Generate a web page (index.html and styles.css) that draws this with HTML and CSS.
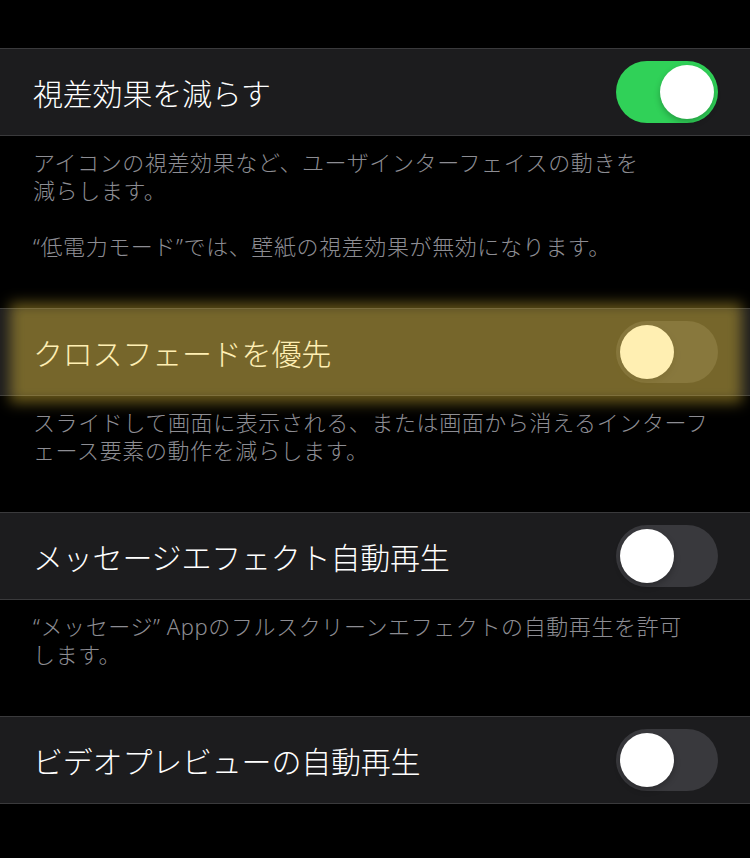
FILE: index.html
```html
<!DOCTYPE html>
<html lang="ja">
<head>
<meta charset="utf-8">
<link rel="stylesheet" href="styles.css">
</head>
<body>
<div class="page">
  <div class="row">
    <span class="label">視差効果を減らす</span>
    <span class="switch on"><span class="knob"></span></span>
  </div>
  <div class="footer">アイコンの視差効果など、ユーザインターフェイスの動きを<br>減らします。<br><br>“低電力モード”では、壁紙の視差効果が無効になります。</div>

  <div class="row highlighted">
    <span class="label">クロスフェードを優先</span>
    <span class="switch"><span class="knob"></span></span>
    <span class="glow"></span>
  </div>
  <div class="footer">スライドして画面に表示される、または画面から消えるインターフ<br>ェース要素の動作を減らします。</div>

  <div class="row">
    <span class="label">メッセージエフェクト自動再生</span>
    <span class="switch"><span class="knob"></span></span>
  </div>
  <div class="footer">“メッセージ” Appのフルスクリーンエフェクトの自動再生を許可<br>します。</div>

  <div class="row">
    <span class="label">ビデオプレビューの自動再生</span>
    <span class="switch"><span class="knob"></span></span>
  </div>
</div>
</body>
</html>
```
FILE: styles.css
```css
html, body {
  margin: 0;
  background: #000;
}
body {
  font-family: "Noto Sans", "Noto Sans CJK JP", sans-serif;
  width: 750px;
  height: 858px;
  overflow: hidden;
}
.page {
  padding-top: 48px;
}
.row {
  position: relative;
  height: 86px;
  background: #1c1c1e;
  border-top: 1px solid #3a3a3c;
  border-bottom: 1px solid #3a3a3c;
  display: flex;
  align-items: center;
  justify-content: space-between;
  padding: 0 32px 0 33px;
}
.label {
  font-family: "Noto Sans CJK JP", sans-serif;
  font-size: 30px;
  font-weight: 300;
  color: #fff;
  letter-spacing: -0.2px;
}
.footer {
  padding: 12px 33px 48px;
  font-size: 22px;
  font-weight: 300;
  line-height: 28px;
  color: #8d8d93;
  white-space: nowrap;
  letter-spacing: 0.6px;
}
.switch {
  position: relative;
  width: 102px;
  height: 62px;
  border-radius: 31px;
  background: #39393d;
  flex: none;
}
.switch.on {
  background: #30d158;
}
.knob {
  position: absolute;
  top: 4px;
  left: 4px;
  width: 54px;
  height: 54px;
  border-radius: 50%;
  background: #fff;
  box-shadow: 0 3px 6px rgba(0,0,0,0.25);
}
.switch.on .knob {
  left: 44px;
}
.glow {
  position: absolute;
  top: -6px;
  bottom: -8px;
  left: 10px;
  right: 8px;
  background: rgba(255, 215, 62, 0.40);
  filter: blur(7px);
  pointer-events: none;
}
```
